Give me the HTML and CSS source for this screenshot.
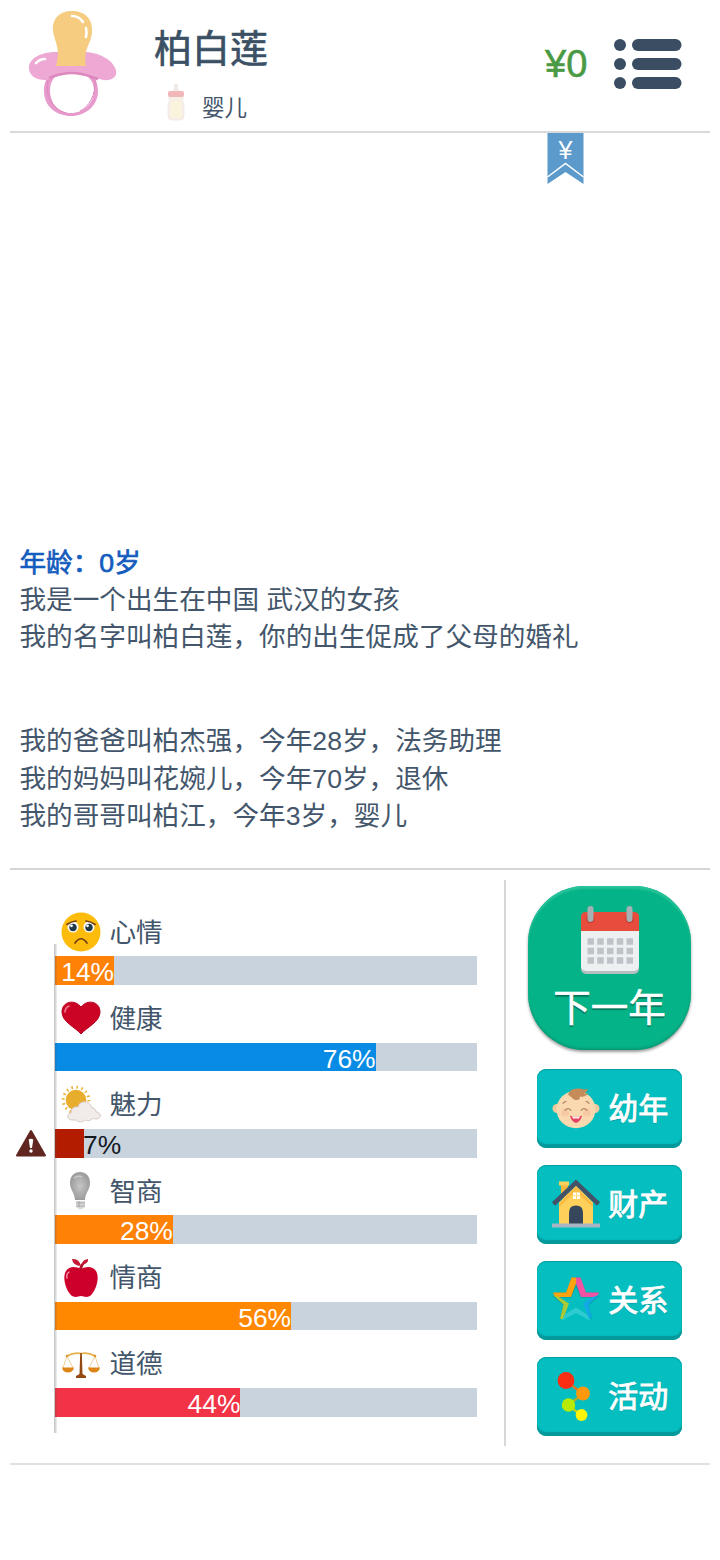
FILE: index.html
```html
<!DOCTYPE html>
<html lang="zh-CN">
<head>
<meta charset="utf-8">
<title>柏白莲</title>
<link rel="stylesheet" href="styles.css">
</head>
<body>
<main class="app">
  <header class="header">
    <svg class="pacifier" viewBox="0 0 90 108">
      <path fill="#e79acb" fill-rule="evenodd" d="M43 54C27 54 16 66 16 81C16 97 29 106 43 106S70 96 70 81C70 66 59 54 43 54ZM43 61C55 61 66 68 66 80C66 94 55 103 43 103S22 94 22 80C22 68 31 61 43 61Z"/>
      <path fill="none" stroke="#dd88bf" stroke-width="1" d="M20 70C17 86 24 99 38 103M67 70C68 85 61 97 52 101"/>
      <path fill="#eea8d4" d="M1 59C0 48 14 42 28 42H58C72 43 85 50 88 60C90 69 80 72 71 69C61 67 56 63 43 63C30 63 28 69 17 70C8 70 2 66 1 59Z"/>
      <path fill="none" stroke="#dc88bd" stroke-width="2.500" d="M21 68C27 66 31 63 44 63C57 63 62 67 70 69"/>
      <path fill="#f5cc80" d="M25 21C24 8 32 1 44 1C57 1 65 9 64 22C63 35 55 38 58 56H28C33 39 27 33 25 21Z"/>
      <path fill="none" stroke="#fff" stroke-width="2.600" stroke-linecap="round" d="M44 6Q51 6 55 12M58 18Q59 23 58 27M8 53Q12 49 17 49"/>
    </svg>
    <div class="identity">
      <h1 class="name">柏白莲</h1>
      <div class="stage">
        <svg class="bottle" viewBox="0 0 20 38">
          <path fill="#f1e9e3" d="M6 9L8 6V1H12V6L15 9Z"/>
          <path fill="#f8efe6" stroke="#eee5de" stroke-width=".7" d="M3 13H17Q16 18 18 23V33Q18 37 14 37H6Q2 37 2 33V23Q4 18 3 13Z"/>
          <path fill="#faf4dc" d="M5 18H15V34H5Z"/>
          <rect x="2" y="8" width="16" height="6" rx="2" fill="#f0b8bb"/>
        </svg>
        <span>婴儿</span>
      </div>
    </div>
    <div class="money">¥0</div>
    <svg class="menu" viewBox="0 0 68 50" fill="#3a4d62">
      <circle cx="6" cy="6" r="6"/><rect x="18" width="49.500" height="12" rx="6"/>
      <circle cx="6" cy="25" r="6"/><rect x="18" y="19" width="49.500" height="12" rx="6"/>
      <circle cx="6" cy="44" r="6"/><rect x="18" y="38" width="49.500" height="12" rx="6"/>
    </svg>
  </header>

  <section class="log">
    <div class="ribbon">
      <svg class="ribbon-shape" viewBox="0 0 37 52">
        <path fill="#5b9aca" d="M.5 0H36.500V51L18.500 39L.5 51Z"/>
        <path fill="none" stroke="#fff" stroke-width="1.500" d="M.5 44L18.500 30.500L36.500 44"/>
      </svg>
      <span class="ribbon-text">¥</span>
    </div>
    <h2 class="age">年龄：0岁</h2>
    <p class="line">我是一个出生在中国 武汉的女孩</p>
    <p class="line">我的名字叫柏白莲，你的出生促成了父母的婚礼</p>
    <p class="line family">我的爸爸叫柏杰强，今年28岁，法务助理</p>
    <p class="line">我的妈妈叫花婉儿，今年70岁，退休</p>
    <p class="line">我的哥哥叫柏江，今年3岁，婴儿</p>
  </section>

  <section class="panel">
    <div class="stats">
      <div class="axis"></div>
      <div class="stat">
        <div class="label">
          <svg class="icon" viewBox="0 0 40 40">
            <circle cx="20" cy="20" r="19.500" fill="#fdbb0b"/>
            <circle cx="12" cy="15" r="5.500" fill="#fff"/><circle cx="28" cy="15" r="5.500" fill="#fff"/>
            <circle cx="12" cy="15.500" r="3.700" fill="#203a49"/><circle cx="28" cy="15.500" r="3.700" fill="#203a49"/>
            <circle cx="10.500" cy="13.800" r="1.400" fill="#fff"/><circle cx="26.500" cy="13.800" r="1.400" fill="#fff"/>
            <path fill="none" stroke="#713f16" stroke-width="1.700" stroke-linecap="round" d="M6 12.500Q10 9.500 15 9M25 9Q30 9.500 34 12.500M14 31Q20 22.500 26 31"/>
          </svg>
          <span>心情</span>
        </div>
        <div class="bar"><div class="fill orange" style="width:14.100%"><span class="value">14%</span></div></div>
      </div>
      <div class="stat">
        <div class="label">
          <svg class="icon" viewBox="0 0 40 40">
            <path fill="#cb0325" stroke="#b90021" d="M20 36C14 29 1 24 1 14C1 3 14 1 20 9C26 1 39 3 39 14C39 24 26 29 20 36Z"/>
            <path fill="none" stroke="#ee7389" stroke-width="1.600" stroke-linecap="round" d="M4 14Q4 10 8 8"/>
          </svg>
          <span>健康</span>
        </div>
        <div class="bar"><div class="fill blue" style="width:76%"><span class="value">76%</span></div></div>
      </div>
      <div class="stat">
        <div class="label">
          <svg class="icon" viewBox="0 0 40 40">
            <circle cx="15" cy="15" r="12.800" fill="none" stroke="#eab33c" stroke-width="3" stroke-dasharray="1.500 3.527"/>
            <circle cx="15" cy="15" r="10.300" fill="#e9ad2d"/>
            <path fill="#f1ebe9" stroke="#cfc2bd" stroke-width=".8" d="M11 35C6 35 5 29 10 28C10 23 14 21 17 22C18 15 29 15 31 23C34 23 35 25 35 27C40 27 41 33 36 34C33 34 32 33 31 34C28 37 25 35 24 35C21 38 17 37 15 35Z"/>
          </svg>
          <span>魅力</span>
        </div>
        <div class="bar">
          <svg class="warning" viewBox="0 0 32 28">
            <path fill="#60261f" stroke="#60261f" stroke-width="2" stroke-linejoin="round" d="M16 2L30 26.500H2Z"/>
            <path fill="#fff" d="M13.700 10.500Q16 9 18.300 10.500L17 19H15Z"/><circle cx="16" cy="22" r="1.700" fill="#fff"/>
          </svg>
          <div class="fill red" style="width:7%"></div><span class="value dark">7%</span>
        </div>
      </div>
      <div class="stat">
        <div class="label">
          <svg class="icon" viewBox="0 0 40 40">
            <defs><radialGradient id="bulb"><stop stop-color="#c6c6c6"/><stop offset="1" stop-color="#9c9c9c"/></radialGradient></defs>
            <path fill="url(#bulb)" d="M9 12C9 5 13 1 19 1S29 5 29 12C29 19 24 22 24 29H14C14 22 9 19 9 12Z"/>
            <path fill="#d8d8d8" d="M15 30H24V36L21 38H18L15 36Z"/>
            <path fill="none" stroke="#a0a0a0" stroke-width=".8" d="M15 32H24M15 35H24M18 30V36"/>
            <path fill="none" stroke="#c9c9c9" stroke-width="1.500" d="M13 7Q17 4 21 6"/>
          </svg>
          <span>智商</span>
        </div>
        <div class="bar"><div class="fill orange" style="width:28%"><span class="value">28%</span></div></div>
      </div>
      <div class="stat">
        <div class="label">
          <svg class="icon" viewBox="0 0 40 40">
            <path fill="#cd002c" d="M20 11C25 8 32 8 35 13C39 20 35 31 31 36C28 40 24 39 20 38C16 39 12 40 9 36C5 31 1 20 5 13C8 8 15 8 20 11Z"/>
            <path fill="#b0112d" d="M18 11C19 8 19 7 21 5L24 2L26 3C22 7 22 8 21 12Z"/>
            <path fill="#c41a35" d="M11 1Q18 0 20 8Q12 8 11 1ZM21 7Q21 2 27 1Q28 5 21 7Z"/>
            <path fill="none" stroke="#f2a0b0" stroke-width="1.300" stroke-linecap="round" d="M6 20Q5 16 8 14"/>
          </svg>
          <span>情商</span>
        </div>
        <div class="bar"><div class="fill amber" style="width:56%"><span class="value">56%</span></div></div>
      </div>
      <div class="stat">
        <div class="label">
          <svg class="icon" viewBox="0 0 40 40">
            <path fill="none" stroke="#e6b04b" stroke-width="1.700" d="M6 12Q13 8 20 9.500Q27 8 34 12"/>
            <path fill="none" stroke="#efcf96" stroke-width="1" d="M6 12L2 24M6 12L12 24M34 12L28 24M34 12L38 24"/>
            <path fill="#dd8617" d="M1 23.500H13Q12 28.500 7 28.500T1 23.500ZM27 23.500H39Q38 28.500 33 28.500T27 23.500Z"/>
            <path fill="#944812" d="M19.200 9H20.800L21.500 30L25 32V34H15V32L18.500 30Z"/>
            <circle cx="6" cy="12" r="1.300" fill="#db9831"/><circle cx="34" cy="12" r="1.300" fill="#db9831"/>
          </svg>
          <span>道德</span>
        </div>
        <div class="bar"><div class="fill rose" style="width:44%"><span class="value">44%</span></div></div>
      </div>
    </div>

    <nav class="actions">
      <button class="next">
        <svg class="calendar" viewBox="0 0 58 69">
          <rect y="9" width="58" height="59" rx="5" fill="#b5bec0"/>
          <rect y="7" width="58" height="58" rx="5" fill="#ecf0f1"/>
          <path fill="#e84c3d" d="M0 25V11Q0 6 5 6H53Q58 6 58 11V25Z"/>
          <circle cx="9.500" cy="13" r="4" fill="#bd3930"/><circle cx="48.500" cy="13" r="4" fill="#bd3930"/>
          <rect x="6.500" width="6" height="16" rx="3" fill="#a7b1b3"/><rect x="45.500" width="6" height="16" rx="3" fill="#a7b1b3"/>
          <path fill="none" stroke="#bdc3c7" stroke-width="6.500" stroke-dasharray="6.500 3.250" d="M6.500 35.500H52M6.500 45H52M6.500 54.500H52"/>
        </svg>
        <span>下一年</span>
      </button>
      <button class="action">
        <svg class="action-icon" viewBox="0 0 48 48">
          <circle cx="5" cy="25" r="4.500" fill="#f4c99c"/><circle cx="43" cy="25" r="4.500" fill="#f4c99c"/>
          <ellipse cx="24" cy="26" rx="19.500" ry="18.800" fill="#fad9b0"/>
          <circle cx="13" cy="29" r="4" fill="#f8c9a5"/><circle cx="35" cy="29" r="4" fill="#f8c9a5"/>
          <path fill="#c58b59" d="M16 11Q18 4 28 5Q34 7 36 5Q35 9 32 10Q35 11 37 9Q34 14 28 13Q28 18 22 16Z"/>
          <path fill="none" stroke="#a77f59" stroke-width="1.100" stroke-linecap="round" d="M11 20Q12 18 14 18M34 18Q36 18 37 20M13 27Q16 23 19 27M29 27Q32 23 35 27"/>
          <path fill="#e84361" d="M18 32Q24 35 30 32Q29 38 24 39.500Q19 38 18 32Z"/><path fill="#fff" d="M20 32.800Q24 34.500 28 32.800L27 35H21Z"/>
        </svg>
        <span>幼年</span>
      </button>
      <button class="action">
        <svg class="action-icon" viewBox="0 0 48 48">
          <path fill="#f7b63d" d="M9 4H16V18H9Z"/><path fill="#ffd15b" d="M7 2H17V6H7Z"/>
          <path fill="#ffd15b" d="M7 23L24 6L41 23V46H7Z"/>
          <path fill="#fbbd45" d="M7 24L24 7L41 24V28L24 12L7 28Z"/>
          <path fill="none" stroke="#42536a" stroke-width="4.500" d="M1.500 24.500L24 3L46.500 24.500"/>
          <path fill="#36465b" d="M17 45V33Q17 26 24 26T31 33V45Z"/>
          <rect x="21" y="13" width="7" height="6.500" fill="#fff"/><path stroke="#ffd15b" stroke-width=".8" d="M24.500 13V19.500M21 16.200H28"/>
          <rect y="44" width="48" height="4" fill="#a7b6c4"/>
        </svg>
        <span>财产</span>
      </button>
      <button class="action">
        <svg class="action-icon" viewBox="0 0 48 48">
          <path fill="none" stroke="#05989b" stroke-width="1.200" d="M1 17.500H14.500L20 2.500H28L33.500 17.500H47M3 21.500H19L24 9L29 21.500H45M1 20L12 29.500L8.500 43M47 20L36 29.500L39.500 43"/>
          <path fill="#ffa20b" d="M1 17H14L19.500 2H24V8L19 21.500H3Z"/>
          <path fill="#f052a4" d="M47 17H34L28.500 2H24V8L29 21.500H45Z"/>
          <path fill="#a9ca38" d="M1 19.500L11.500 29L8 43L11 44L17 28L6 21Z"/>
          <path fill="#12a9e7" d="M47 19.500L36.500 29L40 43L37 42L31 28L42 21Z"/>
          <path fill="#2ecbd0" d="M10 45L13 39L24 32L35 39L38 45L24 37.500Z"/>
        </svg>
        <span>关系</span>
      </button>
      <button class="action">
        <svg class="action-icon" viewBox="0 0 48 49">
          <g fill="none" stroke-linecap="round">
            <path stroke="#d7782a" stroke-width="2.500" d="M14 10L31 23"/>
            <path stroke="#a9ad28" stroke-width="2.500" d="M31 23L16 34"/>
            <path stroke="#b7d322" stroke-width="2.500" d="M16 34L29 44"/>
          </g>
          <circle cx="14" cy="9.500" r="8.400" fill="#fb2d12"/><circle cx="31" cy="22.500" r="6.900" fill="#ff990b"/>
          <circle cx="16.500" cy="34" r="6.700" fill="#b7eb06"/><circle cx="29.500" cy="44" r="5.900" fill="#fff409"/>
        </svg>
        <span>活动</span>
      </button>
    </nav>
  </section>
</main>
</body>
</html>
```

FILE: styles.css
```css
* { box-sizing: border-box; }
body {
  margin: 0;
  background: #fff;
  color: #43566b;
  font-family: "Liberation Sans", "Noto Sans CJK SC", sans-serif;
}
h1, h2, p { margin: 0; font-weight: 400; }
svg { display: block; flex: none; overflow: visible; }
.app { width: 720px; height: 1560px; padding: 0 10px; }

.header {
  display: flex;
  align-items: flex-start;
  height: 132.500px;
  padding: 10px 18px 0;
  border-bottom: 2px solid #d9d9da;
}
.pacifier { width: 90px; height: 108px; }
.identity { margin-left: 36px; width: 391px; padding-top: 11px; }
.name { font-size: 38px; line-height: 56px; color: #3b5065; -webkit-text-stroke: .7px #3b5065; }
.stage { display: flex; align-items: flex-start; gap: 16px; margin: 5px 0 0 12px; height: 40px; font-size: 22.500px; line-height: 40px; }
.bottle { width: 20px; height: 38px; margin-top: 1px; }
.stage span { padding-top: 7px; }
.money { width: 69px; margin-top: 31px; font-size: 38px; line-height: 46px; color: #4a9a44; -webkit-text-stroke: .6px #4a9a44; }
.menu { width: 68px; height: 50px; margin-top: 29px; }

.log {
  position: relative;
  display: flex;
  flex-direction: column;
  justify-content: flex-end;
  height: 737.500px;
  padding: 0 10px 33px 9.500px;
  border-bottom: 2px solid #d5d5d6;
  font-size: 26.640px;
  line-height: 37.250px;
  white-space: nowrap;
}
.age { font-size: inherit; color: #145cbd; -webkit-text-stroke: .7px #145cbd; }
.family { margin-top: 67px; }
.ribbon { position: absolute; left: 537px; top: 0; width: 37px; height: 52px; }
.ribbon-shape { width: 37px; height: 52px; }
.ribbon-text { position: absolute; inset: 0; text-align: center; font-size: 25px; line-height: 35px; color: #fff; }

.panel { display: flex; height: 595px; padding-top: 10px; border-bottom: 2px solid #e1e1e2; }
.stats {
  position: relative;
  width: 496px;
  height: 566px;
  padding: 32px 27px 0 44.500px;
  border-right: 2px solid #d7d7d8;
}
.axis {
  position: absolute;
  z-index: 1;
  left: 44px;
  top: 64px;
  width: 3px;
  height: 489px;
  background: linear-gradient(90deg, rgba(80, 85, 90, .38), rgba(80, 85, 90, .08));
}
.stat { height: 86.400px; }
.label { display: flex; align-items: center; gap: 9px; height: 40px; padding-left: 6px; font-size: 26.640px; line-height: 40px; }
.label span { padding-top: 1px; }
.icon { width: 40px; height: 40px; }
.bar { position: relative; display: flex; height: 28.500px; margin-top: 4.300px; background: #c9d3de; }
.fill { display: flex; justify-content: flex-end; height: 100%; }
.value { font-size: 26.400px; line-height: 32px; color: #fff; }
.dark { margin-left: -1px; color: #14181e; }
.orange { background: #ff8106; }
.amber { background: #ff8800; }
.blue { background: #078be4; }
.red { background: #b41c00; }
.rose { background: #f23245; }
.warning { position: absolute; left: -40px; top: 0; width: 32px; height: 28px; }

.actions { display: flex; flex-direction: column; align-items: center; width: 204px; padding: 6px 0 0 3px; }
button {
  display: flex;
  align-items: center;
  flex: none;
  border: 0;
  padding: 0;
  color: #fff;
  font-family: inherit;
  white-space: nowrap;
}
.next {
  flex-direction: column;
  width: 163px;
  height: 164px;
  margin-bottom: 19px;
  padding-top: 20px;
  border-radius: 57px;
  background: #04b387;
  box-shadow: inset 0 3px 2px #28c299, inset 0 -2px 2px #079c77, 0 2px 3px rgba(0, 0, 0, .4);
  font-size: 37.500px;
  line-height: 54px;
  -webkit-text-stroke: .5px #fff;
  text-shadow: 0 2px 1px #08745b;
}
.calendar { width: 58px; height: 69px; margin-bottom: 6px; }
.action {
  width: 144.500px;
  height: 79px;
  margin-bottom: 17px;
  padding: 0 0 2px 15px;
  gap: 8px;
  border-radius: 9px;
  background: #04bec0;
  box-shadow: inset 0 -4px 1px #07989b, inset 0 1px 1px #069da0;
  font-size: 30px;
  line-height: 44px;
  -webkit-text-stroke: .9px #fff;
  text-shadow: 0 1px 1px #078d90;
}
.action span { padding-top: 2px; }
.action-icon { width: 48px; height: 49px; }
```
